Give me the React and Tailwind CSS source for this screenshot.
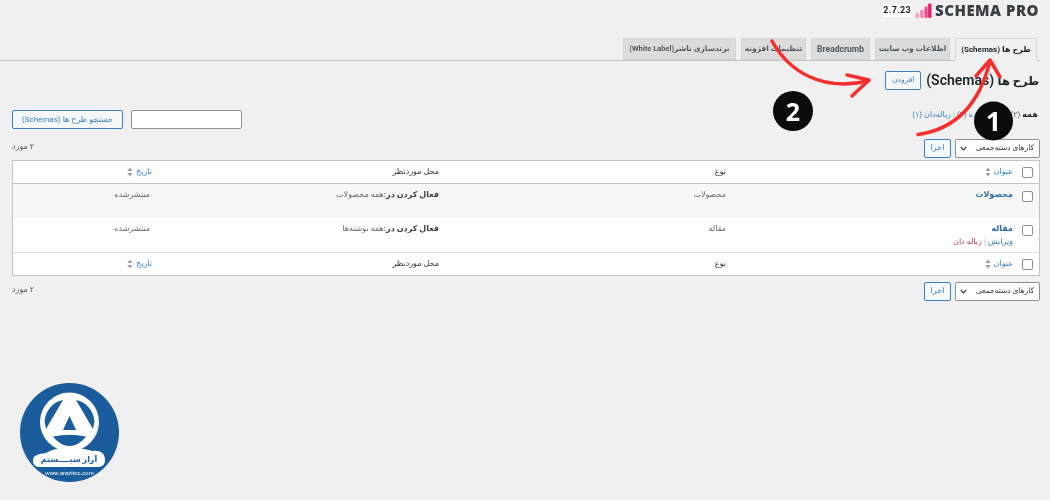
import React from "react";

function Sort() {
  return (
    <svg width="6" height="10" viewBox="0 0 6 10" className="shrink-0">
      <path d="M3 0.5L5.6 4H0.4Z M3 9.5L0.4 6H5.6Z" fill="#9a9fa5" />
    </svg>
  );
}
function Cb() {
  return <span className="block w-[11px] h-[11px] rounded-[2px] border border-[#8c8f94] bg-white shrink-0" />;
}
function Bulk() {
  return (
    <div className="flex items-center gap-[4px]">
      <div className="w-[85px] h-[19px] bg-white border border-[#8c8f94] rounded-[2px] flex items-center justify-between pr-[5px] pl-[4px] text-[7.5px] text-[#2c3338] whitespace-nowrap">
        <span>کارهای دسته‌جمعی</span>
        <svg width="7" height="5" viewBox="0 0 7 5" className="shrink-0"><path d="M0.7 0.8L3.5 3.8L6.3 0.8" stroke="#2c3338" strokeWidth="1.2" fill="none" /></svg>
      </div>
      <div className="w-[27px] h-[19px] bg-[#f6f7f7] border border-[#3582c4] rounded-[2px] flex items-center justify-center text-[8px] text-[#3582c4]">اجرا</div>
    </div>
  );
}
const cols = "grid grid-cols-[26px_287px_287px_287px_1fr]";
function HeadRow({ top }) {
  return (
    <div className={cols + " h-[23px] items-center bg-white text-[8px] text-[#2c3338] " + (top ? "border-b border-[#c3c4c7]" : "border-t border-[#dcdcde]")}>
      <div className="flex pr-[6px]"><Cb /></div>
      <div className="flex items-center gap-[3px] text-[#3582c4]"><span>عنوان</span><Sort /></div>
      <div>نوع</div>
      <div>محل موردنظر</div>
      <div className="flex items-center gap-[3px] text-[#3582c4]"><span>تاریخ</span><Sort /></div>
    </div>
  );
}
function Row({ alt, title, type, where, actions }) {
  return (
    <div className={cols + " h-[34px] text-[8px] text-[#646970] " + (alt ? "bg-[#f6f7f7]" : "bg-white")}>
      <div className="flex pr-[6px] pt-[7px]"><Cb /></div>
      <div className="pt-[4px]">
        <div className="font-bold text-[#2f6fa8] leading-[13px]">{title}</div>
        {actions && (
          <div className="leading-[13px]">
            <span className="text-[#3582c4]">ویرایش</span>
            <span className="text-[#a7aaad]"> | </span>
            <span className="text-[#c0395a]">زباله دان</span>
          </div>
        )}
      </div>
      <div className="pt-[4px] leading-[13px]">{type}</div>
      <div className="pt-[4px] leading-[13px]"><b className="text-[#3c434a]">فعال کردن در:</b>{where}</div>
      <div className="pt-[4px] pr-[2px] leading-[13px]">منتشرشده</div>
    </div>
  );
}
const tabs = [
  ["طرح ها (Schemas)", "w-[82px] text-[8px]"],
  ["اطلاعات وب سایت", "w-[75px] text-[7.5px]"],
  ["Breadcrumb", "w-[59px] text-[8.5px]"],
  ["تنظیمات افزونه", "w-[65px] text-[7.5px]"],
  ["برندسازی ناشر(White Label)", "w-[113px] text-[7.5px]"],
];

export default function App() {
  return (
    <div dir="rtl" className="relative w-[1050px] h-[500px] overflow-hidden bg-[#f0f0f1] text-[#50575e] blur-[0.3px] font-['Roboto','DejaVu_Sans',sans-serif]">
      {/* brand */}
      <div dir="ltr" className="flex items-center justify-end h-[20px] pt-[1px] pr-[11px] mb-[18px]">
        <span className="bg-white px-[1px] text-[9px] font-bold text-[#222] mr-[3px] tracking-[0.3px]">2.7.23</span>
        <svg width="17" height="15" viewBox="0 0 16 15" className="mr-[3px]">
          <rect x="0" y="10" width="3.6" height="5" rx="1.2" fill="#f5a3c0" />
          <rect x="4.6" y="7" width="3.6" height="8" rx="1.2" fill="#f08cb0" />
          <rect x="9" y="3.5" width="3.2" height="11.5" rx="1.2" fill="#ea4c89" />
          <rect x="12.6" y="0.5" width="3.4" height="14.5" rx="1.2" fill="#e8216e" />
        </svg>
        <span className="text-[15px] font-extrabold text-[#3a3f45] font-['Open_Sans',sans-serif] tracking-[0.5px] leading-none">SCHEMA PRO</span>
      </div>
      {/* tabs */}
      <div className="flex items-end gap-[5px] h-[23px] pr-[3px] border-b border-[#c3c4c7] mr-[10px]">
        {tabs.map(([t, w], i) => (
          <div key={t} className={w + " shrink-0 flex items-center justify-center border border-[#d4d5d7] font-bold whitespace-nowrap " + (i === 0 ? "bg-[#f0f0f1] border-b-[#f0f0f1] text-[#1d2327] h-[23px] -mb-[1px]" : "h-[22px] bg-[#dcdcde] text-[#50575e]")}>
            {t}
          </div>
        ))}
      </div>
      <div className="pr-[10px] pl-[12px]">
        {/* heading */}
        <div className="flex items-center gap-[5px] h-[20px] mt-[9px] pr-[1px]">
          <h1 className="text-[14px] font-semibold text-[#1d2327] leading-none whitespace-nowrap"><span className="text-[11.5px] font-bold">طرح ها</span> (Schemas)</h1>
          <span className="w-[36px] h-[19px] bg-[#f6f7f7] border border-[#3582c4] rounded-[2px] flex items-center justify-center text-[7.5px] text-[#3582c4]">افزودن</span>
        </div>
        {/* views + search */}
        <div className="flex justify-between items-start h-[33px] mt-[11px]">
          <div className="text-[8px] pt-[8px] pr-[2px] whitespace-nowrap">
            <b className="text-[#1d2327]">همه</b><span> (۲)</span><span className="text-[#a7aaad]"> | </span>
            <span className="text-[#3582c4]">منتشرشده (۲)</span><span className="text-[#a7aaad]"> | </span>
            <span className="text-[#3582c4]">زباله‌دان (۱)</span>
          </div>
          <div className="flex items-center gap-[8px] mt-[9px]">
            <div className="w-[111px] h-[19px] bg-white border border-[#8c8f94] rounded-[2px]" />
            <div className="w-[111px] h-[19px] bg-[#f6f7f7] border border-[#3582c4] rounded-[2px] flex items-center justify-center text-[8px] text-[#3582c4] whitespace-nowrap">جستجو طرح ها (Schemas)</div>
          </div>
        </div>
        {/* top nav */}
        <div className="flex justify-between items-center h-[20px] mt-[4px]">
          <Bulk />
          <span className="text-[8px] -mt-[3px]">۲ مورد</span>
        </div>
        {/* table */}
        <div className="mt-[2px] border border-[#c3c4c7] bg-white">
          <HeadRow top />
          <Row alt title="محصولات" type="محصولات" where="همه محصولات" />
          <Row title="مقاله" type="مقاله" where="همه نوشته‌ها" actions />
          <HeadRow />
        </div>
        {/* bottom nav */}
        <div className="flex justify-between items-center h-[20px] mt-[5px]">
          <Bulk />
          <span className="text-[8px] -mt-[3px]">۲ مورد</span>
        </div>
      </div>

      {/* annotations */}
      <svg className="absolute left-0 top-0 pointer-events-none" width="1050" height="500" viewBox="0 0 1050 500">
        <circle cx="993.5" cy="121" r="19.5" fill="#0b0b0b" />
        <circle cx="793" cy="111" r="20" fill="#0b0b0b" />
        <path d="M918 134.500C950 130 978 110 990 61" stroke="#f5302c" strokeWidth="3.500" fill="none" strokeLinecap="round" />
        <path d="M976 76L990 60L1000 77" stroke="#f5302c" strokeWidth="3.500" fill="none" strokeLinecap="round" strokeLinejoin="round" />
        <path d="M772 41C788 70 820 92 868 81" stroke="#f5302c" strokeWidth="3.500" fill="none" strokeLinecap="round" />
        <path d="M847 75L869 80L852 96" stroke="#f5302c" strokeWidth="3.500" fill="none" strokeLinecap="round" strokeLinejoin="round" />
      </svg>
      <div dir="ltr" className="absolute left-[984px] top-[107px] w-[19px] text-center text-[27px] font-bold text-white leading-[28px] font-['Open_Sans',sans-serif]">1</div>
      <div dir="ltr" className="absolute left-[783px] top-[97px] w-[20px] text-center text-[25px] font-bold text-white leading-[28px] font-['Open_Sans',sans-serif]">2</div>

      {/* logo */}
      <div className="absolute left-[20px] top-[383px] w-[99px] h-[99px] rounded-full bg-[#1a5c9c]">
        <svg width="99" height="99" viewBox="0 0 99 99" className="absolute left-0 top-0">
          <circle cx="49.500" cy="39" r="29.500" fill="#fff" />
          <path d="M43 17C33 19 26 27 24.500 38L26 46L43 17Z" fill="#1a5c9c" />
          <path d="M56 17C66 19 73 27 74.500 38L73 46L56 17Z" fill="#1a5c9c" />
          <path d="M33 53.500Q49.500 50 66 53.500C61 60 55 63 49.500 63C44 63 38 60 33 53.500Z" fill="#1a5c9c" />
          <path d="M49.500 33L56 47H43Z" fill="#1a5c9c" />
          <path d="M13 78C13 72 18 71 26 70C33 66 38 65 49.500 65C61 65 66 66 72 68C80 67 85 70 85 77C85 82 82 84 78 84H20C16 84 13 82 13 78Z" fill="#fff" />
        </svg>
        <div dir="rtl" className="absolute left-[13px] w-[72px] top-[70px] text-center text-[8px] font-bold text-[#1a5c9c] leading-[14px] whitespace-nowrap">آراز سیــــستم</div>
        <div dir="ltr" className="absolute left-0 right-0 top-[86px] text-center text-[6px] text-white font-['Liberation_Sans',sans-serif] leading-[8px]">www.arazitco.com</div>
      </div>
    </div>
  );
}
